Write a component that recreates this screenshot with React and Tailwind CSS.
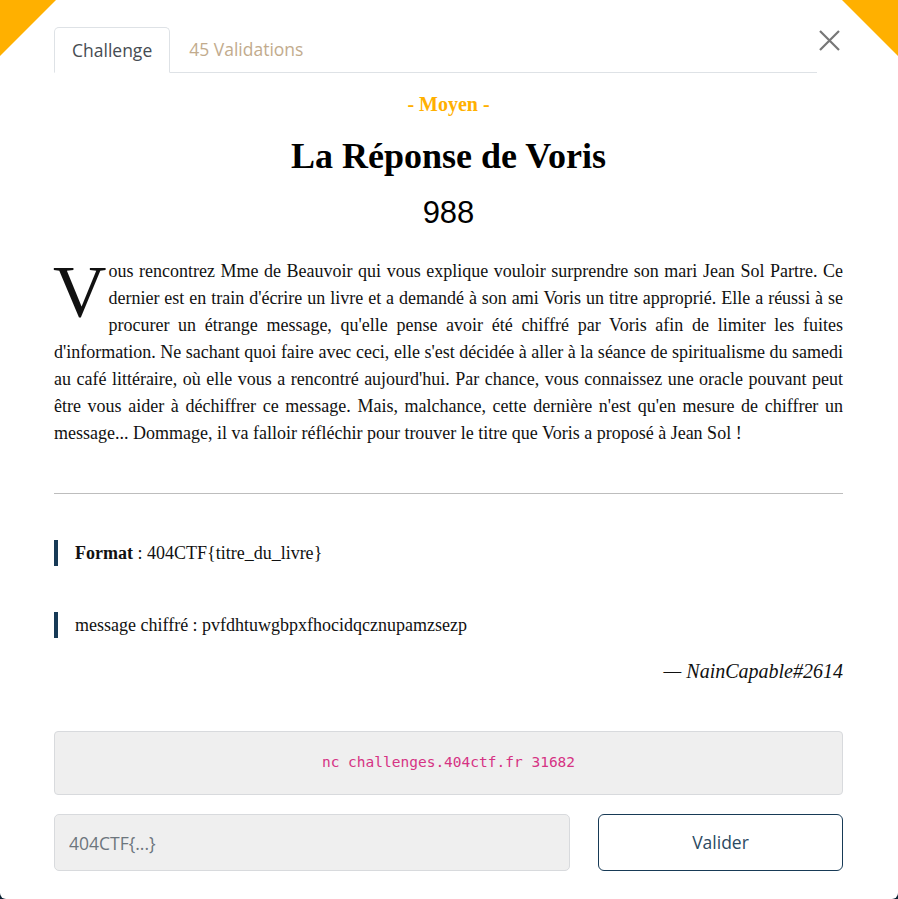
import { useState } from 'react';

const serif = "font-['Liberation_Serif','Times_New_Roman',serif]";
const ui = "font-['Open_Sans','Noto_Sans',sans-serif]";

const Corner = ({ side }) => (
    <svg
        width="56"
        height="56"
        viewBox="0 0 56 56"
        className={`absolute top-0 ${side === 'left' ? 'left-0' : 'right-0'}`}
    >
        {side === 'left' ? (
            <polygon points="0,0 56,0 0,56" fill="#ffb000" />
        ) : (
            <polygon points="0,0 56,0 56,56" fill="#ffb000" />
        )}
    </svg>
);

const App = () => {
    const [flag, setFlag] = useState('');

    return (
        <div className="w-[898px] h-[899px] bg-[#0b2233] overflow-hidden">
            <div className="relative h-full bg-white rounded-b-[6px] overflow-hidden pl-[54px] pr-[55px]">
                <Corner side="left" />
                <Corner side="right" />

                <button className="absolute left-[819px] top-[30px] w-[21px] h-[21px]">
                    <svg width="21" height="21" viewBox="0 0 21 21">
                        <path d="M1 1 L20 20 M20 1 L1 20" stroke="#777" strokeWidth="2.2" fill="none" />
                    </svg>
                </button>

                <div className={`pt-[27px] mr-[26px] flex border-b border-[#dee2e6] text-[17.5px] ${ui}`}>
                    <div className="h-[46px] -mb-px px-[17px] flex items-center border border-[#dee2e6] border-b-white rounded-t-[5px] bg-white text-[#464c52]">
                        Challenge
                    </div>
                    <div className="h-[45px] px-[19px] flex items-center text-[#c2ab8d]">45 Validations</div>
                </div>

                <div className={`mt-[18px] text-center text-[20px] leading-[26px] font-bold text-[#ffb000] ${serif}`}>
                    - Moyen -
                </div>
                <h1 className={`mt-[19px] text-center text-[36px] leading-[40px] font-bold text-black ${serif}`}>
                    La Réponse de Voris
                </h1>
                <div className="mt-[19px] text-center text-[31px] leading-[36px] text-black font-['Liberation_Sans',Arial,sans-serif]">
                    988
                </div>

                <p className={`mt-[27px] text-[18px] leading-[27px] text-justify text-[#111] ${serif}`}>
                    <span className="float-left text-[74px] leading-[60px] mr-[2px] mt-[4px] -ml-[1px]">V</span>
                    ous rencontrez Mme de Beauvoir qui vous explique vouloir surprendre son mari Jean Sol Partre. Ce
                    dernier est en train d'écrire un livre et a demandé à son ami Voris un titre approprié. Elle a
                    réussi à se procurer un étrange message, qu'elle pense avoir été chiffré par Voris afin de limiter
                    les fuites d'information. Ne sachant quoi faire avec ceci, elle s'est décidée à aller à la séance
                    de spiritualisme du samedi au café littéraire, où elle vous a rencontré aujourd'hui. Par chance,
                    vous connaissez une oracle pouvant peut être vous aider à déchiffrer ce message. Mais, malchance,
                    cette dernière n'est qu'en mesure de chiffrer un message... Dommage, il va falloir réfléchir pour
                    trouver le titre que Voris a proposé à Jean Sol !
                </p>

                <hr className="mt-[46px] border-0 border-t border-[#bdbdbd]" />

                <div className={`text-[18px] text-[#111] ${serif}`}>
                    <div className="mt-[46px] h-[26px] border-l-4 border-[#173a56] pl-[17px] flex items-center">
                        <span>
                            <b>Format</b> : 404CTF{'{'}titre_du_livre{'}'}
                        </span>
                    </div>
                    <div className="mt-[46px] h-[26px] border-l-4 border-[#173a56] pl-[17px] flex items-center">
                        message chiffré : pvfdhtuwgbpxfhocidqcznupamzsezp
                    </div>
                    <div className="mt-[20px] text-right italic text-[20px] leading-[26px]">— NainCapable#2614</div>
                </div>

                <div className="mt-[47px] h-[64px] flex items-center justify-center bg-[#efefef] border border-[#d8dadd] rounded-[4px] text-[14.5px] text-[#d63384] font-['DejaVu_Sans_Mono','Liberation_Mono',monospace]">
                    nc challenges.404ctf.fr 31682
                </div>

                <div className={`mt-[19px] flex gap-[28px] ${ui}`}>
                    <input
                        value={flag}
                        onChange={(e) => setFlag(e.target.value)}
                        placeholder="404CTF{...}"
                        className="w-[516px] h-[57px] px-[14px] bg-[#efefef] border border-[#d8dadd] rounded-[5px] text-[17.5px] text-[#495057] placeholder:text-[#6c757d] outline-none"
                    />
                    <button className="flex-1 h-[57px] border border-[#173a56] rounded-[6px] text-[17.5px] text-[#2c4a63] bg-white">
                        Valider
                    </button>
                </div>
            </div>
        </div>
    );
};

export default App;
